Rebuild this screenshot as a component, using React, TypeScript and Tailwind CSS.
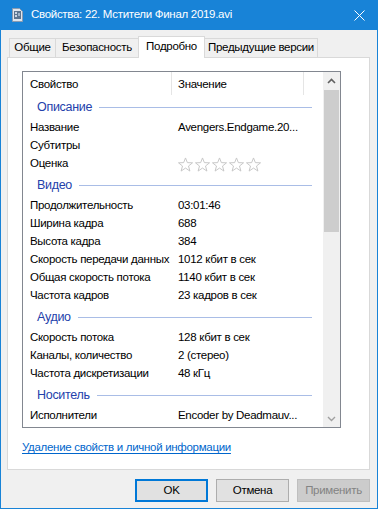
import React from 'react';

type Row = { label: string; value?: string; stars?: boolean };
type Group = { title: string; rows: Row[] };

const groups: Group[] = [
  {
    title: 'Описание',
    rows: [
      { label: 'Название', value: 'Avengers.Endgame.20...' },
      { label: 'Субтитры' },
      { label: 'Оценка', stars: true },
    ],
  },
  {
    title: 'Видео',
    rows: [
      { label: 'Продолжительность', value: '03:01:46' },
      { label: 'Ширина кадра', value: '688' },
      { label: 'Высота кадра', value: '384' },
      { label: 'Скорость передачи данных', value: '1012 кбит в сек' },
      { label: 'Общая скорость потока', value: '1140 кбит в сек' },
      { label: 'Частота кадров', value: '23 кадров в сек' },
    ],
  },
  {
    title: 'Аудио',
    rows: [
      { label: 'Скорость потока', value: '128 кбит в сек' },
      { label: 'Каналы, количество', value: '2 (стерео)' },
      { label: 'Частота дискретизации', value: '48 кГц' },
    ],
  },
  {
    title: 'Носитель',
    rows: [{ label: 'Исполнители', value: 'Encoder by Deadmauv...' }],
  },
];

const Star = () => (
  <svg width="15" height="15" viewBox="0 0 16 16">
    <polygon
      points="8,1 10,6 15.5,6.2 11.2,9.6 12.7,15 8,11.8 3.3,15 4.8,9.6 0.5,6.2 6,6"
      fill="none"
      stroke="#c4c4c4"
      strokeWidth="1"
    />
  </svg>
);

const tabs = [
  { name: 'Общие', w: 'w-[47px]' },
  { name: 'Безопасность', w: 'w-[84px]' },
  { name: 'Подробно', w: 'w-[67px]', active: true },
  { name: 'Предыдущие версии', w: 'w-[114px]' },
];

const App = () => {
  return (
    <div
      className="w-[378px] h-[509px] flex flex-col bg-[#f0f0f0] border-x border-b border-[#1883d7] text-[11.5px] tracking-[-0.3px] text-black overflow-hidden"
      style={{ fontFamily: '"Liberation Sans", Arial, sans-serif' }}
    >
      {/* title bar */}
      <div className="h-[30px] shrink-0 bg-[#1883d7] flex items-center pl-[11px] pr-[9px] text-white">
        <svg width="11" height="14" viewBox="0 0 11 14" className="mr-[8px]">
          <path d="M0.5 0.5 H7.5 L10.5 3.5 V13.5 H0.5 Z" fill="#dfe6ee" stroke="#8a9bb0" />
          <rect x="2" y="3" width="7" height="8" fill="#5d7590" />
          <rect x="3" y="4" width="2" height="2" fill="#c9d6e4" />
          <rect x="3" y="7" width="2" height="2" fill="#c9d6e4" />
          <rect x="6" y="5" width="2" height="3" fill="#9fb3c8" />
        </svg>
        <span className="text-[11.5px] leading-none whitespace-nowrap">Свойства: 22. Мстители Финал 2019.avi</span>
        <svg width="11" height="11" viewBox="0 0 11 11" className="ml-auto mr-[3px]">
          <path d="M0.5 0.5 L10.5 10.5 M10.5 0.5 L0.5 10.5" stroke="#ffffff" strokeWidth="1" />
        </svg>
      </div>

      {/* body */}
      <div className="flex-1 flex flex-col pl-[6px] pr-[7px]">
        {/* tabs */}
        <div className="mt-[6px] h-[21px] flex items-end pl-[2px]">
          {tabs.map((t, i) => (
            <div
              key={t.name}
              className={
                t.active
                  ? `${t.w} h-[22px] -mb-px -ml-px relative z-10 bg-white border border-b-0 border-[#d9d9d9] flex items-center justify-center pb-[1px] whitespace-nowrap`
                  : `${t.w} h-[19px] ${i > 0 ? '-ml-px' : ''} bg-[#f0f0f0] border border-b-0 border-[#d9d9d9] flex items-center justify-center whitespace-nowrap`
              }
            >
              {t.name}
            </div>
          ))}
        </div>

        {/* tab panel */}
        <div className="h-[413px] bg-white border border-[#d9d9d9] pl-[14px] pt-[13px]">
          <div className="w-[319px] h-[357px] border border-[#828790] flex overflow-hidden">
            <div className="flex-1 flex flex-col overflow-hidden">
              {/* header */}
              <div className="h-[23px] shrink-0 flex items-center">
                <div className="w-[148px] h-full pl-[7px] pt-[2px] flex items-center">Свойство</div>
                <div className="w-px h-[23px] bg-[#e5e5e5]" />
                <div className="w-[131px] h-full pl-[6px] pt-[2px] flex items-center">Значение</div>
                <div className="w-px h-[23px] bg-[#e5e5e5]" />
              </div>
              {groups.map((g) => (
                <div key={g.title}>
                  <div className="h-[24px] flex items-center pl-[14px] pr-[11px] pt-[1px]">
                    <span className="text-[#2341ab] text-[12.5px]">{g.title}</span>
                    <div className="flex-1 h-px bg-[#a9bde6] ml-[7px]" />
                  </div>
                  {g.rows.map((r) => (
                    <div key={r.label} className="h-[18px] flex items-center">
                      <div className="w-[148px] pl-[7px] whitespace-nowrap">{r.label}</div>
                      <div className="pl-[7px] whitespace-nowrap">
                        {r.stars ? (
                          <div className="flex gap-[2px] pt-[1px]">
                            <Star />
                            <Star />
                            <Star />
                            <Star />
                            <Star />
                          </div>
                        ) : (
                          r.value
                        )}
                      </div>
                    </div>
                  ))}
                </div>
              ))}
            </div>

            {/* scrollbar */}
            <div className="w-[17px] h-full bg-[#f0f0f0] flex flex-col">
              <div className="h-[17px] flex items-center justify-center">
                <svg width="9" height="6" viewBox="0 0 9 6">
                  <path d="M1 5 L4.5 1.5 L8 5" fill="none" stroke="#606060" strokeWidth="1.6" />
                </svg>
              </div>
              <div className="flex-1 px-[1px] pt-px">
                <div className="h-[142px] bg-[#cdcdcd]" />
              </div>
              <div className="h-[17px] flex items-center justify-center">
                <svg width="9" height="6" viewBox="0 0 9 6">
                  <path d="M1 1 L4.5 4.5 L8 1" fill="none" stroke="#a0a0a0" strokeWidth="1.4" />
                </svg>
              </div>
            </div>
          </div>

          <a className="mt-[11px] block w-fit leading-[16px] text-[#0066cc] underline underline-offset-[2px]">
            Удаление свойств и личной информации
          </a>
        </div>

        {/* buttons */}
        <div className="mt-[9px] flex justify-end gap-[8px]">
          <button className="w-[73px] h-[23px] bg-[#e1e1e1] border-2 border-[#0078d7] flex items-center justify-center">
            OK
          </button>
          <button className="w-[73px] h-[23px] bg-[#e1e1e1] border border-[#adadad] flex items-center justify-center">
            Отмена
          </button>
          <button className="w-[73px] h-[23px] bg-[#cccccc] border border-[#bfbfbf] text-[#838383] flex items-center justify-center">
            Применить
          </button>
        </div>
      </div>
    </div>
  );
};

export default App;
